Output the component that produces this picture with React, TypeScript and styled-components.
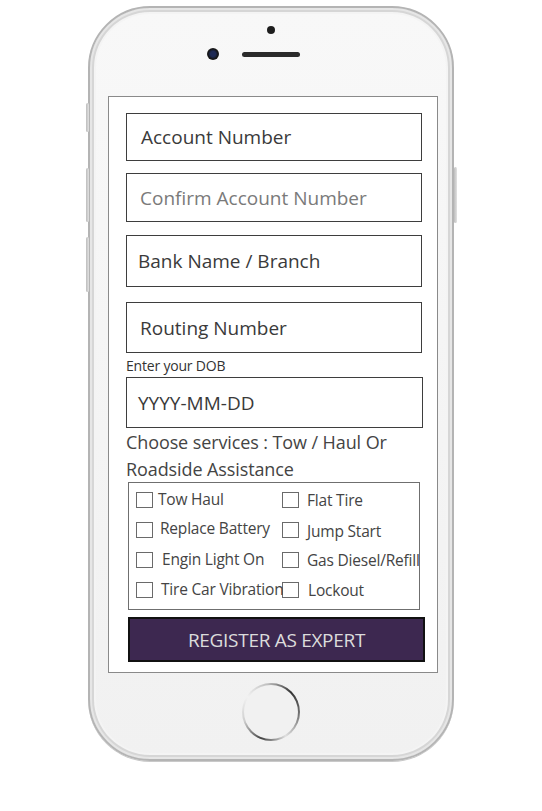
import React from "react";
import styled, { createGlobalStyle } from "styled-components";

const Global = createGlobalStyle`
  html, body { margin: 0; padding: 0; background: #ffffff; }
  body { font-family: "Open Sans", "Noto Sans", sans-serif; }
  * { box-sizing: border-box; }
`;

const Page = styled.div`
  width: 542px;
  height: 811px;
  padding: 6px 0 0 88px;
  background: #fff;
`;

const Phone = styled.div`
  position: relative;
  width: 366px;
  height: 755px;
  border-radius: 62px;
  background: linear-gradient(#f8f8f8, #f1f1f1);
  border: 2px solid #b4b4b4;
  box-shadow: inset 0 0 0 2px #e6e6e6, inset 0 0 0 4px #d6d6d6, inset 0 0 0 6px #f4f4f4,
    0 1px 0 #c9c9c9;
  display: flex;
  flex-direction: column;
`;

const SideButton = styled.div<{ $side: "left" | "right"; $top: number; $h: number }>`
  position: absolute;
  ${(p) => (p.$side === "left" ? "left: -4px;" : "right: -5px;")}
  top: ${(p) => p.$top}px;
  width: 3px;
  height: ${(p) => p.$h}px;
  background: linear-gradient(90deg, #bdbdbd, #e2e2e2);
  border-radius: 2px;
`;

const TopBezel = styled.div`
  height: 88px;
  width: 100%;
  display: flex;
  flex-direction: column;
  padding-top: 18px;
`;

const Sensor = styled.div`
  width: 8px;
  height: 8px;
  border-radius: 50%;
  background: #1e1e1e;
  margin-left: 177px;
`;

const EarRow = styled.div`
  display: flex;
  align-items: center;
  gap: 23px;
  margin-top: 14px;
  margin-left: 117px;
`;

const Camera = styled.div`
  width: 12px;
  height: 12px;
  border-radius: 50%;
  background: radial-gradient(circle at 50% 50%, #1e2a55 0 30%, #151515 60%, #3a3a3a 100%);
`;

const Speaker = styled.div`
  width: 58px;
  height: 5px;
  border-radius: 3px;
  background: #2b2b2b;
`;

const Screen = styled.div`
  width: 330px;
  height: 577px;
  margin-left: 18px;
  background: #fff;
  border: 1px solid #8a8a8a;
  padding: 16px 0 0 17px;
  display: flex;
  flex-direction: column;
`;

const Field = styled.div<{ $w?: number; $h: number; $mt: number; $pl: number; $muted?: boolean }>`
  width: ${(p) => p.$w ?? 296}px;
  height: ${(p) => p.$h}px;
  margin-top: ${(p) => p.$mt}px;
  border: 1.5px solid #3e3e3e;
  display: flex;
  align-items: center;
  padding-left: ${(p) => p.$pl}px;
  font-size: 19px;
  color: ${(p) => (p.$muted ? "#7a7a7a" : "#3a3a3a")};
  white-space: nowrap;
`;

const SmallLabel = styled.div`
  font-size: 14px;
  line-height: 18px;
  color: #333;
  margin-top: 4px;
  height: 20px;
  letter-spacing: -0.2px;
`;

const Heading = styled.div`
  font-size: 18px;
  line-height: 27px;
  color: #444;
  margin-top: 1px;
  letter-spacing: -0.1px;
  width: 300px;
`;

const Services = styled.div`
  width: 292px;
  height: 128px;
  margin-left: 2px;
  margin-top: -1px;
  border: 1.5px solid #6f6f6f;
  padding: 9px 0 0 7px;
  display: grid;
  grid-template-columns: 146px 1fr;
  grid-auto-rows: 30px;
  overflow: hidden;
`;

const Option = styled.label<{ $gap: number; $dy: number }>`
  display: flex;
  align-items: flex-start;
  gap: ${(p) => p.$gap}px;
  font-size: 15.5px;
  line-height: 16px;
  color: #444;
  white-space: nowrap;
  letter-spacing: -0.2px;
  span {
    position: relative;
    top: ${(p) => p.$dy}px;
  }
`;

const Box = styled.span`
  display: inline-block;
  width: 17px;
  height: 16px;
  border: 1px solid #6a6a6a;
  background: #fff;
  flex: none;
  position: static !important;
`;

const RegisterButton = styled.button`
  width: 297px;
  height: 45px;
  margin-top: 7px;
  margin-left: 2px;
  background: #3d2850;
  border: 2px solid #111;
  color: #dcdcdc;
  font-family: "Open Sans", "Noto Sans", sans-serif;
  font-size: 19px;
  letter-spacing: -0.3px;
  padding: 0;
  cursor: pointer;
`;

const BottomBezel = styled.div`
  flex: 1;
  width: 100%;
  display: flex;
  justify-content: center;
  padding-top: 10px;
`;

const HomeButton = styled.div`
  width: 58px;
  height: 58px;
  border-radius: 50%;
  background: conic-gradient(from 200deg, #444, #cfcfcf, #f2f2f2, #bdbdbd, #333, #777, #e0e0e0, #444);
  padding: 2px;
  &::after {
    content: "";
    display: block;
    width: 100%;
    height: 100%;
    border-radius: 50%;
    background: #f1f1f1;
  }
`;

const left = [
  { t: "Tow Haul", g: 5, dy: -1 },
  { t: "Replace Battery", g: 7, dy: -2 },
  { t: "Engin Light On", g: 9, dy: -1 },
  { t: "Tire Car Vibration", g: 8, dy: -1 },
];
const right = [
  { t: "Flat Tire", g: 8, dy: 0 },
  { t: "Jump Start", g: 8, dy: 1 },
  { t: "Gas Diesel/Refill", g: 8, dy: 0 },
  { t: "Lockout", g: 9, dy: 0 },
];

export default function App() {
  const rows = left.map((l, i) => [l, right[i]]).flat();
  return (
    <Page>
      <Global />
      <Phone>
        <SideButton $side="left" $top={95} $h={29} />
        <SideButton $side="left" $top={160} $h={54} />
        <SideButton $side="left" $top={229} $h={55} />
        <SideButton $side="right" $top={159} $h={56} />
        <TopBezel>
          <Sensor />
          <EarRow>
            <Camera />
            <Speaker />
          </EarRow>
        </TopBezel>
        <Screen>
          <Field $h={48} $mt={0} $pl={14}>Account Number</Field>
          <Field $h={49} $mt={12} $pl={13} $muted>Confirm Account Number</Field>
          <Field $h={52} $mt={13} $pl={11}>Bank Name / Branch</Field>
          <Field $h={51} $mt={15} $pl={13}>Routing Number</Field>
          <SmallLabel>Enter your DOB</SmallLabel>
          <Field $w={297} $h={51} $mt={0} $pl={11}>YYYY-MM-DD</Field>
          <Heading>Choose services : Tow / Haul Or Roadside Assistance</Heading>
          <Services>
            {rows.map((o) => (
              <Option key={o.t} $gap={o.g} $dy={o.dy}>
                <Box />
                <span>{o.t}</span>
              </Option>
            ))}
          </Services>
          <RegisterButton>REGISTER AS EXPERT</RegisterButton>
        </Screen>
        <BottomBezel>
          <HomeButton />
        </BottomBezel>
      </Phone>
    </Page>
  );
}
